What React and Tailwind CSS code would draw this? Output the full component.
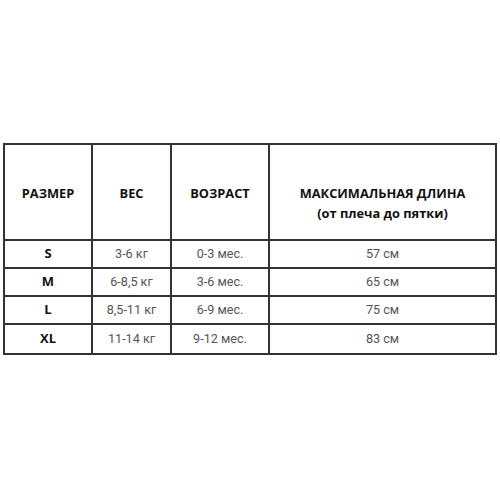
export default function App() {
  const rows = [
    ["S", "3-6 кг", "0-3 мес.", "57 см"],
    ["M", "6-8,5 кг", "3-6 мес.", "65 см"],
    ["L", "8,5-11 кг", "6-9 мес.", "75 см"],
    ["XL", "11-14 кг", "9-12 мес.", "83 см"],
  ];
  const head = "font-['Open_Sans',sans-serif] font-bold text-[12.8px] text-[#111] leading-[20px]";
  const body = "font-['Roboto',sans-serif] text-[12.6px] text-[#555]";
  return (
    <div className="w-[500px] h-[500px] bg-white pt-[143px] pl-[3px]">
      <div className="w-[494px] border-2 border-[#333] grid grid-cols-[88px_79px_98px_1fr]">
        <div className={`h-[96px] border-r-2 border-b-2 border-[#333] flex justify-center pt-[38px] ${head}`}>РАЗМЕР</div>
        <div className={`h-[96px] border-r-2 border-b-2 border-[#333] flex justify-center pt-[38px] ${head}`}>ВЕС</div>
        <div className={`h-[96px] border-r-2 border-b-2 border-[#333] flex justify-center pt-[38px] ${head}`}>ВОЗРАСТ</div>
        <div className={`h-[96px] border-b-2 border-[#333] flex flex-col items-center pt-[38px] ${head}`}>
          <span>МАКСИМАЛЬНАЯ ДЛИНА</span>
          <span>(от плеча до пятки)</span>
        </div>
        {rows.map((r, i) => {
          const last = i === rows.length - 1;
          const bb = last ? "" : "border-b-2";
          return [
            <div key={i + "a"} className={`h-[28px] border-r-2 ${bb} border-[#333] flex items-center justify-center font-['Open_Sans',sans-serif] font-bold text-[13px] text-[#111]`}>{r[0]}</div>,
            <div key={i + "b"} className={`h-[28px] border-r-2 ${bb} border-[#333] flex items-center justify-center ${body}`}>{r[1]}</div>,
            <div key={i + "c"} className={`h-[28px] border-r-2 ${bb} border-[#333] flex items-center justify-center ${body}`}>{r[2]}</div>,
            <div key={i + "d"} className={`h-[28px] ${bb} border-[#333] flex items-center justify-center ${body}`}>{r[3]}</div>,
          ];
        })}
      </div>
    </div>
  );
}
